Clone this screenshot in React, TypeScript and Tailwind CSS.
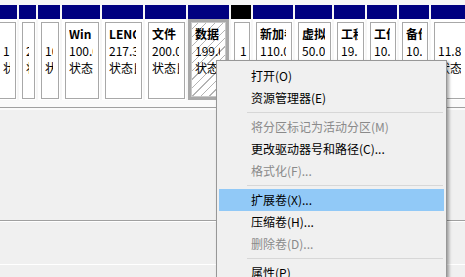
import React from "react";

type P = {
  w: string;
  name?: string;
  size?: string;
  status?: string;
  black?: boolean;
  selected?: boolean;
  pl?: string;
  mr?: string;
  first?: boolean;
};

const parts: P[] = [
  { w: "w-[21px]", size: "10.00 GB", status: "状态良好", first: true },
  { w: "w-[17px]", size: "2.00 GB", status: "状态良好" },
  { w: "w-[22px]", size: "1000 MB", status: "状态良好" },
  { w: "w-[38px]", name: "Win 10", size: "100.00 GB", status: "状态良好" },
  { w: "w-[41px]", name: "LENOVO", size: "217.39 GB", status: "状态良好" },
  { w: "w-[41px]", name: "文件 (E:)", size: "200.00 GB", status: "状态良好" },
  { w: "w-[41px]", name: "数据 (F:)", size: "199.00 GB", status: "状态良好", selected: true },
  { w: "w-[20px]", size: "1", status: "", black: true, pl: "pl-[5px]", mr: "mr-[1px]" },
  { w: "w-[40px]", name: "新加卷 (G:)", size: "110.00 GB", status: "状态良好" },
  { w: "w-[37px]", name: "虚拟机", size: "50.00 GB", status: "状态良好" },
  { w: "w-[31px]", name: "工程", size: "19.53 GB", status: "状态良好" },
  { w: "w-[30px]", name: "工作", size: "10.00 GB", status: "状态良好" },
  { w: "w-[30px]", name: "备份", size: "10.00 GB", status: "状态良好" },
  { w: "w-[37px]", size: "11.80 GB", status: "状态良好" },
];

function Lines({ p }: { p: P }) {
  return (
    <div className={`flex-1 min-w-0 ${p.mr ?? "mr-[5px]"} overflow-hidden whitespace-nowrap leading-[17px] text-black`}>
      <div className="font-bold h-[17px]">{p.name ?? ""}</div>
      <div className="h-[17px]">{p.size}</div>
      <div className="h-[17px]">{p.status}</div>
    </div>
  );
}

function Partition({ p }: { p: P }) {
  return (
    <div className={`flex flex-col shrink-0 ${p.w} ${p.first ? "-ml-[4px]" : ""}`}>
      <div className={`h-[14px] ${p.black ? "bg-black" : "bg-[#000080]"}`} />
      {p.selected ? (
        <div className="flex-1 flex border-[3px] border-[#a8a8a8] bg-[repeating-linear-gradient(135deg,#ffffff_0px,#ffffff_5px,#b4b4b4_5px,#b4b4b4_6px)]">
          <div className="flex-1 min-w-0 flex border border-[#c8c8c8] pl-[3px] pt-[2px]">
            <Lines p={p} />
          </div>
        </div>
      ) : (
        <div className="flex-1 flex bg-white">
          <div
            className={`flex-1 min-w-0 flex mt-[3px] ml-[3px] mr-[1px] mb-[1px] border border-[#a8a8a8] ${p.pl ?? "pl-[3px]"} pt-[2px]`}
          >
            <Lines p={p} />
          </div>
        </div>
      )}
    </div>
  );
}

type Item = { t: string; d?: boolean; h?: boolean } | "sep";

const items: Item[] = [
  { t: "打开(O)" },
  { t: "资源管理器(E)" },
  "sep",
  { t: "将分区标记为活动分区(M)", d: true },
  { t: "更改驱动器号和路径(C)..." },
  { t: "格式化(F)...", d: true },
  "sep",
  { t: "扩展卷(X)...", h: true },
  { t: "压缩卷(H)..." },
  { t: "删除卷(D)...", d: true },
  "sep",
  { t: "属性(P)" },
];

export default function App() {
  return (
    <div className="relative w-[465px] h-[277px] overflow-hidden bg-[#f0f0f0] font-['Noto_Sans_CJK_SC','Noto_Sans',sans-serif] text-[12px]">
      <div className="h-[5px] bg-[#f7f7f7]" />
      <div className="flex gap-[2px] h-[95px] bg-[#f7f7f7]">
        {parts.map((p, i) => (
          <Partition key={i} p={p} />
        ))}
      </div>
      <div className="h-[7px] bg-[#fafafa]" />
      <div className="h-[1px] bg-[#a0a0a0]" />
      <div className="h-[2px] bg-[#fafafa]" />
      <div className="h-[110px]" />
      <div className="h-[1px] bg-[#a0a0a0]" />
      <div className="h-[1px] bg-white" />
      <div className="h-[42px]" />
      <div className="h-[1px] bg-white" />

      <div className="absolute left-[216px] top-[60px] w-[231px] h-[230px] bg-[#f0f0f0] border border-[#979797] shadow-[2px_2px_3px_rgba(0,0,0,0.35)] px-[2px] pt-[4px] text-black">
        {items.map((it, i) =>
          it === "sep" ? (
            <div key={i} className="h-[7px] flex items-center pl-[28px] pr-[1px]">
              <div className="h-[1px] w-full bg-[#d7d7d7]" />
            </div>
          ) : (
            <div
              key={i}
              className={`h-[22px] flex items-center pl-[32px] whitespace-nowrap ${it.h ? "bg-[#91c9f7]" : ""} ${it.d ? "text-[#8a8a8a]" : "text-black"}`}
            >
              {it.t}
            </div>
          )
        )}
      </div>
    </div>
  );
}
